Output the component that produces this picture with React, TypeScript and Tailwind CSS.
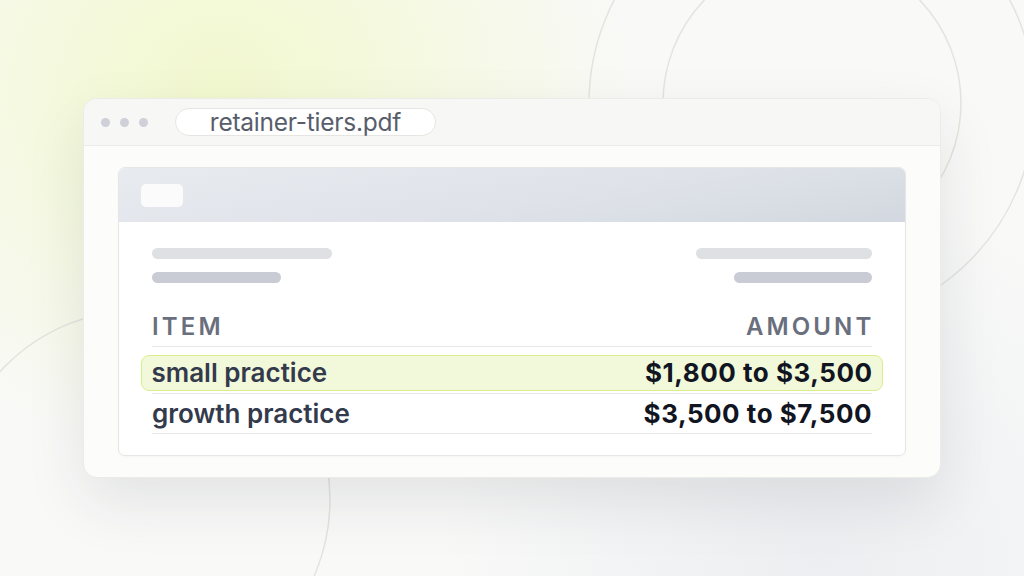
import React from 'react'

// ─── Decorative rings behind the window ─────────────────────────────────────
function Rings() {
  return (
    <svg className="absolute inset-0" width={1024} height={576} viewBox="0 0 1024 576" fill="none">
      <circle cx={812} cy={103} r={149} stroke="#e3e3df" strokeWidth={1.5} />
      <circle cx={812} cy={103} r={223} stroke="#e3e3df" strokeWidth={1.5} />
      <circle cx={140} cy={500} r={190} stroke="#e3e3df" strokeWidth={1.5} />
    </svg>
  )
}

// ─── Skeleton bar ────────────────────────────────────────────────────────────
function Bar({ className }: { className: string }) {
  return <div className={`h-[11px] rounded-full ${className}`} />
}

interface Tier {
  label: string
  range: string
  highlight?: boolean
}

const tiers: Tier[] = [
  { label: 'small practice', range: '$1,800 to $3,500', highlight: true },
  { label: 'growth practice', range: '$3,500 to $7,500' },
]

export default function App() {
  return (
    <div
      className="relative w-[1024px] h-[576px] overflow-hidden bg-[#f9f9f8] bg-[radial-gradient(ellipse_420px_380px_at_220px_90px,#f2f8cf_0%,#f5f9e0_45%,rgba(249,249,248,0)_100%),radial-gradient(circle_at_820px_560px,#eceef1_0px,rgba(249,249,248,0)_380px)]"
      style={{ fontFamily: 'Inter, "Noto Sans", sans-serif' }}
    >
      <Rings />

      <div className="relative flex h-full items-center justify-center">
        {/* ── Window ─────────────────────────────────────────────────────── */}
        <div className="w-[858px] h-[380px] rounded-[14px] border border-[#ebebe8] bg-[#fcfcfb] shadow-[0_24px_60px_rgba(30,35,45,0.10)] overflow-hidden flex flex-col">
          {/* title bar */}
          <div className="h-[47px] shrink-0 flex items-center border-b border-[#ebebe8] bg-[#f7f7f5] pl-[17px]">
            <div className="flex gap-[10px]">
              <span className="w-[9px] h-[9px] rounded-full bg-[#cfd0d8]" />
              <span className="w-[9px] h-[9px] rounded-full bg-[#cfd0d8]" />
              <span className="w-[9px] h-[9px] rounded-full bg-[#cfd0d8]" />
            </div>
            <div className="ml-[27px] w-[261px] h-[28px] rounded-full border border-[#e5e5e2] bg-white flex items-center justify-center text-[24.5px] leading-none text-[#585d6c] tracking-[-0.01em]">
              retainer-tiers.pdf
            </div>
          </div>

          {/* document */}
          <div className="px-[34px] pt-[21px]">
            <div className="h-[289px] rounded-[7px] border border-[#e6e6e4] bg-white overflow-hidden shadow-[0_1px_2px_rgba(0,0,0,0.03)]">
              <div className="h-[54px] bg-[linear-gradient(170deg,#e8ebf0_0%,#dfe3e9_55%,#d3d8e0_100%)] pl-[22px] pt-[16px]">
                <div className="w-[42px] h-[23px] rounded-[5px] bg-[#fbfbfc]" />
              </div>

              <div className="px-[33px]">
                <div className="flex justify-between pt-[26px]">
                  <div className="flex flex-col gap-[13px]">
                    <Bar className="w-[180px] bg-[#dfe0e4]" />
                    <Bar className="w-[129px] bg-[#c9ccd4]" />
                  </div>
                  <div className="flex flex-col items-end gap-[13px]">
                    <Bar className="w-[176px] bg-[#dfe0e4]" />
                    <Bar className="w-[138px] bg-[#c9ccd4]" />
                  </div>
                </div>

                {/* table header */}
                <div className="mt-[32px] flex justify-between border-b border-[#e7e7e7] pb-[7px] text-[24px] leading-none font-semibold tracking-[0.13em] text-[#6a6f7e]">
                  <span>ITEM</span>
                  <span className="-mr-[0.1em]">AMOUNT</span>
                </div>

                {/* rows */}
                {tiers.map(t =>
                  t.highlight ? (
                    <div key={t.label} className="border-b border-[#e7e7e7] pt-[8px] pb-[2px]">
                      <div className="-mx-[11px] h-[36px] rounded-[8px] border-[1.5px] border-[#d8ee8c] bg-[#f2f8da] px-[9.5px] flex items-center justify-between text-[26px] leading-none">
                        <span className="font-semibold text-[#323a4c]">{t.label}</span>
                        <span className="font-bold text-[#111521] tracking-[0.02em]">{t.range}</span>
                      </div>
                    </div>
                  ) : (
                    <div key={t.label} className="h-[40px] border-b border-[#e7e7e7] flex items-center justify-between text-[26px] leading-none">
                      <span className="font-semibold text-[#323a4c]">{t.label}</span>
                      <span className="font-bold text-[#111521] tracking-[0.02em]">{t.range}</span>
                    </div>
                  )
                )}
              </div>
            </div>
          </div>
        </div>
      </div>
    </div>
  )
}
